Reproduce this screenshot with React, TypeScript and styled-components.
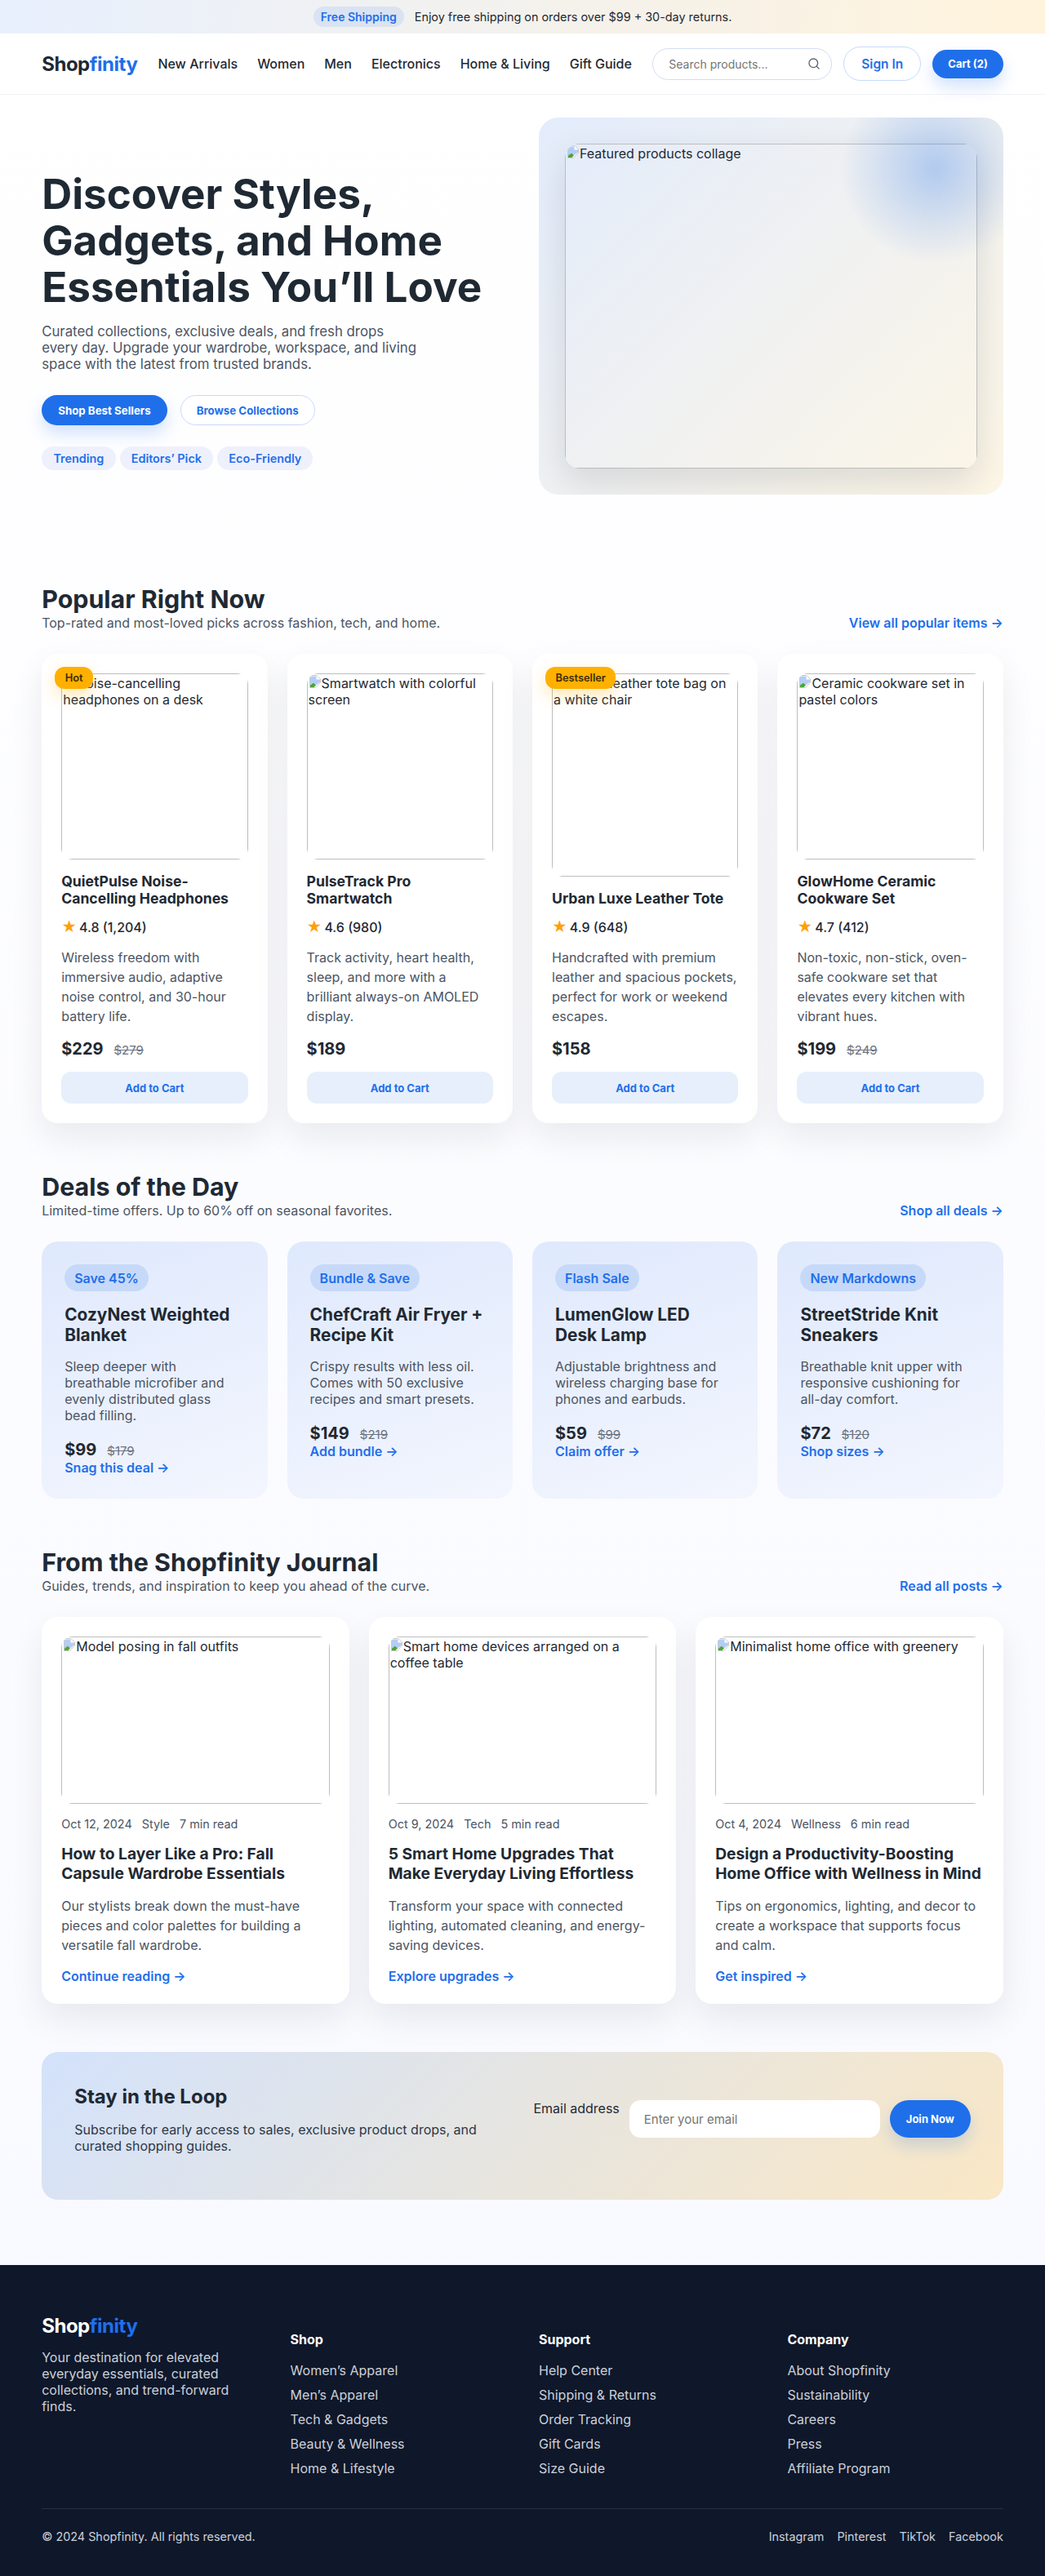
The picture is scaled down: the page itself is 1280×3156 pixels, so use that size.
import styled, { createGlobalStyle } from "styled-components";
import { Search } from "lucide-react";

const GlobalStyle = createGlobalStyle`
  * {
    box-sizing: border-box;
  }

  html,
  body {
    margin: 0;
    padding: 0;
  }

  body {
    background: linear-gradient(180deg, #ffffff 0%, #f8f9ff 100%);
    color: #1f2933;
    font-family: Inter, "Liberation Sans", sans-serif;
  }

  h1, h2, h3, h4, p, ul {
    margin: 0;
    padding: 0;
  }

  ul {
    list-style: none;
  }

  a {
    color: inherit;
    text-decoration: none;
  }
`;

const products = [
  {
    alt: "Noise-cancelling headphones on a desk",
    badge: "Hot",
    title: "QuietPulse Noise-Cancelling Headphones",
    rating: "4.8 (1,204)",
    text: "Wireless freedom with immersive audio, adaptive noise control, and 30-hour battery life.",
    price: "$229",
    old: "$279",
  },
  {
    alt: "Smartwatch with colorful screen",
    title: "PulseTrack Pro Smartwatch",
    rating: "4.6 (980)",
    text: "Track activity, heart health, sleep, and more with a brilliant always-on AMOLED display.",
    price: "$189",
  },
  {
    alt: "Brown leather tote bag on a white chair",
    badge: "Bestseller",
    title: "Urban Luxe Leather Tote",
    rating: "4.9 (648)",
    text: "Handcrafted with premium leather and spacious pockets, perfect for work or weekend escapes.",
    price: "$158",
  },
  {
    alt: "Ceramic cookware set in pastel colors",
    title: "GlowHome Ceramic Cookware Set",
    rating: "4.7 (412)",
    text: "Non-toxic, non-stick, oven-safe cookware set that elevates every kitchen with vibrant hues.",
    price: "$199",
    old: "$249",
  },
];

const deals = [
  {
    tag: "Save 45%",
    title: "CozyNest Weighted Blanket",
    text: "Sleep deeper with breathable microfiber and evenly distributed glass bead filling.",
    price: "$99",
    old: "$179",
    link: "Snag this deal →",
  },
  {
    tag: "Bundle & Save",
    title: "ChefCraft Air Fryer + Recipe Kit",
    text: "Crispy results with less oil. Comes with 50 exclusive recipes and smart presets.",
    price: "$149",
    old: "$219",
    link: "Add bundle →",
  },
  {
    tag: "Flash Sale",
    title: "LumenGlow LED Desk Lamp",
    text: "Adjustable brightness and wireless charging base for phones and earbuds.",
    price: "$59",
    old: "$99",
    link: "Claim offer →",
  },
  {
    tag: "New Markdowns",
    title: "StreetStride Knit Sneakers",
    text: "Breathable knit upper with responsive cushioning for all-day comfort.",
    price: "$72",
    old: "$120",
    link: "Shop sizes →",
  },
];

const posts = [
  {
    alt: "Model posing in fall outfits",
    meta: ["Oct 12, 2024", "Style", "7 min read"],
    title: "How to Layer Like a Pro: Fall Capsule Wardrobe Essentials",
    text: "Our stylists break down the must-have pieces and color palettes for building a versatile fall wardrobe.",
    link: "Continue reading →",
  },
  {
    alt: "Smart home devices arranged on a coffee table",
    meta: ["Oct 9, 2024", "Tech", "5 min read"],
    title: "5 Smart Home Upgrades That Make Everyday Living Effortless",
    text: "Transform your space with connected lighting, automated cleaning, and energy-saving devices.",
    link: "Explore upgrades →",
  },
  {
    alt: "Minimalist home office with greenery",
    meta: ["Oct 4, 2024", "Wellness", "6 min read"],
    title: "Design a Productivity-Boosting Home Office with Wellness in Mind",
    text: "Tips on ergonomics, lighting, and decor to create a workspace that supports focus and calm.",
    link: "Get inspired →",
  },
];

const footerColumns = [
  {
    title: "Shop",
    links: ["Women’s Apparel", "Men’s Apparel", "Tech & Gadgets", "Beauty & Wellness", "Home & Lifestyle"],
  },
  {
    title: "Support",
    links: ["Help Center", "Shipping & Returns", "Order Tracking", "Gift Cards", "Size Guide"],
  },
  {
    title: "Company",
    links: ["About Shopfinity", "Sustainability", "Careers", "Press", "Affiliate Program"],
  },
];

const BrokenIcon = () => (
  <BrokenIconSvg viewBox="0 0 16 16" aria-hidden="true">
    <path d="M1.5 .5h8.5l4.5 4.5v4L8.5 15.5h-7z" fill="#fff" stroke="#c9c9c9" />
    <path d="M2 1.5h7.5v4h4.5v3L9 12.5 6 9.5l-4 3z" fill="#b4cdf6" />
    <path d="M2 15v-2.5L6 9.5l3 3-2.5 2.5z" fill="#4fa535" />
  </BrokenIconSvg>
);

const Picture = ({ alt }: { alt: string }) => (
  <PictureFrame>
    <PictureAlt>
      <BrokenIcon />
      {alt}
    </PictureAlt>
  </PictureFrame>
);

const SectionHead = ({ title, text, link }: { title: string; text: string; link: string }) => (
  <HeadRow>
    <div>
      <SectionTitle>{title}</SectionTitle>
      <SectionText>{text}</SectionText>
    </div>
    <BlueLink>{link}</BlueLink>
  </HeadRow>
);

export default function App() {
  return (
    <>
      <GlobalStyle />

      <AnnounceBar>
        <AnnouncePill>Free Shipping</AnnouncePill>
        <span>Enjoy free shipping on orders over $99 + 30-day returns.</span>
      </AnnounceBar>

      <Header>
        <Logo>
          Shop<span>finity</span>
        </Logo>
        <Nav>
          {["New Arrivals", "Women", "Men", "Electronics", "Home & Living", "Gift Guide"].map((item) => (
            <a key={item} href="#">
              {item}
            </a>
          ))}
        </Nav>
        <HeaderActions>
          <SearchBox>
            <input placeholder="Search products..." />
            <Search size={16} strokeWidth={2} color="#5b6472" />
          </SearchBox>
          <SignIn>Sign In</SignIn>
          <CartButton>Cart (2)</CartButton>
        </HeaderActions>
      </Header>

      <Hero>
        <HeroText>
          <HeroTitle>Discover Styles, Gadgets, and Home Essentials You’ll Love</HeroTitle>
          <HeroLead>
            Curated collections, exclusive deals, and fresh drops every day. Upgrade your wardrobe, workspace, and
            living space with the latest from trusted brands.
          </HeroLead>
          <HeroButtons>
            <HeroButton>Shop Best Sellers</HeroButton>
            <OutlineButton>Browse Collections</OutlineButton>
          </HeroButtons>
          <HeroTags>
            <li>Trending</li>
            <li>Editors’ Pick</li>
            <li>Eco-Friendly</li>
          </HeroTags>
        </HeroText>
        <HeroPanel>
          <Collage>
            <PictureAlt>
              <BrokenIcon />
              Featured products collage
            </PictureAlt>
          </Collage>
        </HeroPanel>
      </Hero>

      <Section>
        <SectionHead
          title="Popular Right Now"
          text="Top-rated and most-loved picks across fashion, tech, and home."
          link="View all popular items →"
        />
        <FourGrid>
          {products.map((product) => (
            <ProductCard key={product.title}>
              {product.badge && <Badge>{product.badge}</Badge>}
              <Picture alt={product.alt} />
              <ProductTitle>{product.title}</ProductTitle>
              <Rating>
                <span>★</span>
                {product.rating}
              </Rating>
              <ProductText>{product.text}</ProductText>
              <PriceRow>
                <Price>{product.price}</Price>
                {product.old && <OldPrice>{product.old}</OldPrice>}
              </PriceRow>
              <AddButton>Add to Cart</AddButton>
            </ProductCard>
          ))}
        </FourGrid>
      </Section>

      <Section>
        <SectionHead
          title="Deals of the Day"
          text="Limited-time offers. Up to 60% off on seasonal favorites."
          link="Shop all deals →"
        />
        <FourGrid>
          {deals.map((deal) => (
            <DealCard key={deal.title}>
              <DealTag>{deal.tag}</DealTag>
              <DealTitle>{deal.title}</DealTitle>
              <DealText>{deal.text}</DealText>
              <PriceRow>
                <Price>{deal.price}</Price>
                <OldPrice>{deal.old}</OldPrice>
              </PriceRow>
              <DealLink>{deal.link}</DealLink>
            </DealCard>
          ))}
        </FourGrid>
      </Section>

      <Section>
        <SectionHead
          title="From the Shopfinity Journal"
          text="Guides, trends, and inspiration to keep you ahead of the curve."
          link="Read all posts →"
        />
        <ThreeGrid>
          {posts.map((post) => (
            <PostCard key={post.title}>
              <PostPicture>
                <Picture alt={post.alt} />
              </PostPicture>
              <PostMeta>
                {post.meta.map((item) => (
                  <span key={item}>{item}</span>
                ))}
              </PostMeta>
              <PostTitle>{post.title}</PostTitle>
              <ProductText>{post.text}</ProductText>
              <BlueLink>{post.link}</BlueLink>
            </PostCard>
          ))}
        </ThreeGrid>
      </Section>

      <Section>
        <Newsletter>
          <NewsCopy>
            <NewsTitle>Stay in the Loop</NewsTitle>
            <NewsText>
              Subscribe for early access to sales, exclusive product drops, and curated shopping guides.
            </NewsText>
          </NewsCopy>
          <NewsForm>
            <NewsLabel htmlFor="newsletter-email">Email address</NewsLabel>
            <NewsInput id="newsletter-email" placeholder="Enter your email" />
            <JoinButton>Join Now</JoinButton>
          </NewsForm>
        </Newsletter>
      </Section>

      <Footer>
        <FooterGrid>
          <div>
            <FooterLogo>
              Shop<span>finity</span>
            </FooterLogo>
            <FooterAbout>
              Your destination for elevated everyday essentials, curated collections, and trend-forward finds.
            </FooterAbout>
          </div>
          {footerColumns.map((column) => (
            <div key={column.title}>
              <FooterHeading>{column.title}</FooterHeading>
              <FooterLinks>
                {column.links.map((link) => (
                  <li key={link}>{link}</li>
                ))}
              </FooterLinks>
            </div>
          ))}
        </FooterGrid>
        <FooterBottom>
          <span>© 2024 Shopfinity. All rights reserved.</span>
          <SocialLinks>
            <span>Instagram</span>
            <span>Pinterest</span>
            <span>TikTok</span>
            <span>Facebook</span>
          </SocialLinks>
        </FooterBottom>
      </Footer>
    </>
  );
}

const AnnounceBar = styled.div`
  display: flex;
  align-items: center;
  justify-content: center;
  gap: 13px;
  height: 41px;
  background: linear-gradient(90deg, #e8f0fe 0%, #fff3dc 100%);
  font-size: 14.4px;
`;

const AnnouncePill = styled.span`
  padding: 4px 9px;
  border-radius: 999px;
  background: rgba(31, 111, 235, 0.1);
  color: #1f6feb;
  font-size: 14px;
  font-weight: 600;
`;

const Header = styled.header`
  display: flex;
  align-items: center;
  gap: 25px;
  height: 75px;
  padding: 0 51.2px;
  border-bottom: 1px solid #f0f2f5;
  background: #fff;
  white-space: nowrap;
`;

const Logo = styled.div`
  flex-shrink: 0;
  color: #1f2933;
  font-size: 24px;
  font-weight: 700;
  letter-spacing: -0.48px;

  span {
    color: #1f6feb;
  }
`;

const Nav = styled.nav`
  display: flex;
  flex-shrink: 0;
  gap: 24px;
  font-size: 16px;
  font-weight: 500;
`;

const HeaderActions = styled.div`
  display: flex;
  flex-shrink: 0;
  align-items: center;
  gap: 14px;
  margin-left: auto;
`;

const SearchBox = styled.label`
  display: flex;
  align-items: center;
  width: 220px;
  height: 39px;
  padding: 0 13px 0 17px;
  border: 1px solid #d3def2;
  border-radius: 999px;
  background: #fff;

  input {
    flex: 1;
    min-width: 0;
    border: 0;
    outline: 0;
    background: transparent;
    font: 400 14px Inter, sans-serif;
  }
`;

const SignIn = styled.button`
  height: 42px;
  padding: 0 21px;
  border: 1px solid #c8dafa;
  border-radius: 999px;
  background: #fff;
  color: #1f6feb;
  font: 600 15.5px Inter, sans-serif;
`;

const PrimaryButton = styled.button`
  height: 37px;
  padding: 0 20px;
  border: 0;
  border-radius: 999px;
  background: #1f6feb;
  box-shadow: 0 10px 20px rgba(31, 111, 235, 0.2);
  color: #fff;
  font: 700 13px Inter, sans-serif;
`;

const CartButton = styled(PrimaryButton)`
  height: 35px;
  padding: 0 19px;
`;

const HeroButton = styled(PrimaryButton)`
  font-size: 13.3px;
`;

const OutlineButton = styled(HeroButton)`
  padding: 0 19px;
  border: 1px solid #c8dafa;
  background: #fff;
  box-shadow: none;
  color: #1f6feb;
`;

const Hero = styled.section`
  display: grid;
  grid-template-columns: 1fr 1fr;
  gap: 40px;
  padding: 28px 51.2px 0;
`;

const HeroText = styled.div`
  padding-top: 65px;
`;

const HeroTitle = styled.h1`
  color: #1f2933;
  font-size: 51.2px;
  font-weight: 700;
  line-height: 57px;
`;

const HeroLead = styled.p`
  max-width: 462px;
  margin-top: 16px;
  color: #4b5563;
  font-size: 16.8px;
`;

const HeroButtons = styled.div`
  display: flex;
  gap: 16px;
  margin-top: 28px;
`;

const HeroTags = styled.ul`
  display: flex;
  gap: 5px;
  margin-top: 26px;

  li {
    padding: 6px 14.2px;
    border-radius: 999px;
    background: #eef0fc;
    color: #1f6feb;
    font-size: 14.4px;
    font-weight: 600;
  }
`;

const HeroPanel = styled.div`
  position: relative;
  padding: 32px;
  overflow: hidden;
  border-radius: 24px;
  background: linear-gradient(135deg, #e3ecfc 0%, #fdf6e6 100%);

  &::after {
    content: "";
    position: absolute;
    top: -55px;
    right: -35px;
    width: 236px;
    height: 236px;
    border-radius: 50%;
    background: radial-gradient(circle, rgba(31, 111, 235, 0.3) 0%, rgba(31, 111, 235, 0) 70%);
  }
`;

const Collage = styled.div`
  display: flex;
  height: 398px;
  overflow: hidden;
  border-radius: 18px;
  box-shadow: 0 16px 40px rgba(15, 23, 42, 0.12);
`;

const PictureFrame = styled.div`
  display: flex;
  flex: 1 0 228px;
  overflow: hidden;
  border-radius: 14px;
`;

const PictureAlt = styled.div`
  flex: 1;
  min-width: 0;
  padding: 1px;
  border: 1px solid #bdbdbd;
  color: #1f2933;
  font-size: 16px;
  line-height: 20px;
`;

const BrokenIconSvg = styled.svg`
  display: inline-block;
  width: 16px;
  height: 16px;
  vertical-align: baseline;
`;

const Section = styled.section`
  padding: 0 51.2px;
  margin-top: 59px;

  ${Hero} + & {
    margin-top: 109px;
  }
`;

const HeadRow = styled.div`
  display: flex;
  align-items: flex-end;
  justify-content: space-between;
  margin-bottom: 28px;
`;

const SectionTitle = styled.h2`
  color: #1f2933;
  font-size: 30.4px;
  font-weight: 700;
  line-height: 38px;
`;

const SectionText = styled.p`
  color: #4b5563;
  font-size: 16px;
`;

const BlueLink = styled.a`
  color: #1f6feb;
  font-size: 16px;
  font-weight: 600;
`;

const FourGrid = styled.div`
  display: grid;
  grid-template-columns: repeat(4, 1fr);
  gap: 24px;
`;

const ThreeGrid = styled.div`
  display: grid;
  grid-template-columns: repeat(3, 1fr);
  gap: 24px;
`;

const ProductCard = styled.article`
  position: relative;
  display: flex;
  flex-direction: column;
  gap: 16px;
  padding: 24px;
  border-radius: 20px;
  background: #fff;
  box-shadow: 0 18px 40px rgba(15, 23, 42, 0.08);
`;

const Badge = styled.span`
  position: absolute;
  top: 16px;
  left: 16px;
  z-index: 1;
  padding: 6px 12.5px;
  border-radius: 12px;
  background: #ffb000;
  box-shadow: 0 8px 20px rgba(255, 176, 0, 0.3);
  color: #3a2c05;
  font-size: 12.8px;
  font-weight: 600;
`;

const ProductTitle = styled.h3`
  color: #1f2933;
  font-size: 17.6px;
  font-weight: 700;
  line-height: 21.2px;
`;

const Rating = styled.div`
  display: flex;
  align-items: center;
  gap: 3px;
  font-size: 16px;
  font-weight: 500;
  line-height: 18px;

  span {
    color: #ff9f0a;
    font-size: 18px;
  }
`;

const ProductText = styled.p`
  color: #4b5563;
  font-size: 16px;
  line-height: 24px;
`;

const PriceRow = styled.div`
  display: flex;
  align-items: baseline;
  gap: 13px;
`;

const Price = styled.span`
  color: #1f2933;
  font-size: 20px;
  font-weight: 700;
`;

const OldPrice = styled.span`
  color: #6b7280;
  font-size: 15px;
  text-decoration: line-through;
`;

const AddButton = styled.button`
  height: 39px;
  border: 0;
  border-radius: 12px;
  background: #e7effc;
  color: #1f6feb;
  font: 700 13px Inter, sans-serif;
`;

const DealCard = styled.article`
  padding: 28px;
  border-radius: 20px;
  background: linear-gradient(160deg, #dfe9fd 0%, #f3f6fe 100%);
`;

const DealTag = styled.span`
  display: inline-block;
  padding: 6.4px 12px;
  border-radius: 999px;
  background: #c6d9f9;
  color: #1f6feb;
  font-size: 16px;
  font-weight: 600;
`;

const DealTitle = styled.h3`
  margin-top: 16px;
  color: #1f2933;
  font-size: 20.8px;
  font-weight: 700;
  line-height: 25px;
`;

const DealText = styled.p`
  margin: 16px 0 20px;
  color: #4b5563;
  font-size: 16px;
  line-height: 20px;
`;

const DealLink = styled(BlueLink)`
  display: block;
  line-height: 20px;
`;

const PostCard = styled(ProductCard)``;

const PostPicture = styled.div`
  display: flex;
  height: 205px;
`;

const PostMeta = styled.div`
  display: flex;
  gap: 12px;
  color: #4b5563;
  font-size: 14.4px;
`;

const PostTitle = styled.h3`
  color: #1f2933;
  font-size: 19.2px;
  font-weight: 700;
  line-height: 24px;
`;

const Newsletter = styled.div`
  display: flex;
  justify-content: space-between;
  height: 181px;
  padding: 40px;
  border-radius: 20px;
  background: linear-gradient(135deg, #d3e2fb 0%, #fae8c6 100%);
`;

const NewsCopy = styled.div`
  width: 520px;
`;

const NewsTitle = styled.h2`
  color: #1f2933;
  font-size: 24px;
  font-weight: 700;
`;

const NewsText = styled.p`
  margin-top: 16px;
  color: #2d3848;
  font-size: 16px;
  line-height: 20px;
`;

const NewsForm = styled.form`
  display: flex;
  align-items: flex-start;
  gap: 12px;
  margin-top: 19px;
`;

const NewsLabel = styled.label`
  font-size: 16px;
  line-height: 20px;
`;

const NewsInput = styled.input`
  width: 307px;
  height: 46px;
  padding: 0 18px;
  border: 0;
  border-radius: 14px;
  background: #fff;
  font: 400 15px Inter, sans-serif;
`;

const JoinButton = styled(PrimaryButton)`
  height: 46px;
  width: 99px;
  padding: 0;
`;

const Footer = styled.footer`
  height: 381px;
  margin-top: 80px;
  padding: 60px 51.2px 0;
  background: #0f172a;
  color: #cbd0d8;
`;

const FooterGrid = styled.div`
  display: grid;
  grid-template-columns: repeat(4, 1fr);
  gap: 40px;
  height: 238px;
`;

const FooterLogo = styled(Logo)`
  color: #fff;
`;

const FooterAbout = styled.p`
  margin-top: 14px;
  font-size: 16px;
  line-height: 20px;
`;

const FooterHeading = styled.h4`
  margin-top: 22px;
  color: #fff;
  font-size: 16px;
  font-weight: 700;
  line-height: 18px;
`;

const FooterLinks = styled.ul`
  display: flex;
  flex-direction: column;
  gap: 11px;
  margin-top: 20px;
  font-size: 16px;
  line-height: 19px;
`;

const FooterBottom = styled.div`
  display: flex;
  align-items: center;
  justify-content: space-between;
  padding-top: 25px;
  border-top: 1px solid #262f42;
  font-size: 14.4px;
`;

const SocialLinks = styled.div`
  display: flex;
  gap: 16px;
`;
